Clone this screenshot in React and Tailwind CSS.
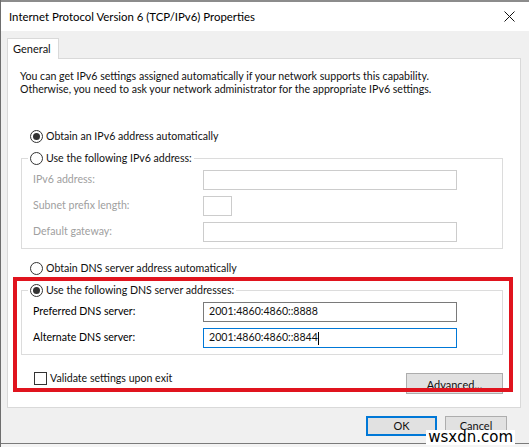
import React from 'react';

// Round option button with its caption
const Radio = ({ checked, label }) => (
  <span className="flex items-center gap-[3px] h-[14px] leading-[14px]">
    <span className="w-[13px] h-[13px] rounded-full border border-[#333333] bg-white flex items-center justify-center shrink-0">
      {checked && <span className="w-[7px] h-[7px] rounded-full bg-[#333333]" />}
    </span>
    <span className="whitespace-nowrap">{label}</span>
  </span>
);

// One label + text box line inside a group
const FieldRow = ({ label, value, small, disabled, focused }) => (
  <div className="flex items-center h-[20px] ml-[5px]">
    <span className={`w-[170px] whitespace-nowrap ${disabled ? 'text-[#a0a0a0]' : 'text-black'}`}>{label}</span>
    <div
      className={`h-[20px] bg-white border flex items-center pl-[5px] whitespace-nowrap ${small ? 'w-[29px]' : 'w-[254px]'} ${
        disabled ? 'border-[#cccccc]' : focused ? 'border-[#0078d7]' : 'border-[#7a7a7a]'
      }`}
    >
      {value}
      {focused && <span className="inline-block w-px h-[13px] bg-black" />}
    </div>
  </div>
);

const GroupBox = ({ legend, checked, children, className = '' }) => (
  <fieldset className={`mx-[13px] mr-[17px] border border-[#dcdcdc] pl-[6px] pt-[5px] pb-[6px] ${className}`}>
    <legend className="px-[2px] bg-white">
      <Radio checked={checked} label={legend} />
    </legend>
    <div className="flex flex-col gap-[6px]">{children}</div>
  </fieldset>
);

const DialogButton = ({ children, primary, className = '' }) => (
  <button
    className={`h-[20px] bg-[#e1e1e1] flex items-center justify-center ${
      primary ? 'border-2 border-[#0078d7]' : 'border border-[#adadad]'
    } ${className}`}
  >
    {children}
  </button>
);

export default function App() {
  return (
    <div className="relative w-[529px] h-[447px] overflow-hidden bg-[#f0f0f0] border-l border-[#6e6e6e] text-[10.6px] text-[#111] font-['Segoe_UI',Lato,'Noto_Sans',sans-serif]">
      {/* title bar */}
      <div className="h-[31px] bg-white border-t-2 border-[#8c8c8c] flex items-center justify-between pl-[8px] pr-[10px]">
        <span className="text-[11.4px] text-black">Internet Protocol Version 6 (TCP/IPv6) Properties</span>
        <svg width="11" height="11" viewBox="0 0 11 11" className="mr-[4px]">
          <path d="M0.5 0.5 L10.5 10.5 M10.5 0.5 L0.5 10.5" stroke="#111" strokeWidth="1" />
        </svg>
      </div>

      {/* tab strip */}
      <div className="mt-[7px] ml-[6px] flex">
        <div className="relative z-10 -mb-px h-[21px] w-[52px] bg-white border border-b-0 border-[#d9d9d9] flex items-center pl-[5px] text-[11px]">
          General
        </div>
      </div>

      {/* tab page */}
      <div className="ml-[6px] mr-[8px] h-[350px] bg-white border border-[#d9d9d9] pt-[11px]">
        <p className="pl-[12px] leading-[13px]">
          You can get IPv6 settings assigned automatically if your network supports this capability.
          <br />
          Otherwise, you need to ask your network administrator for the appropriate IPv6 settings.
        </p>

        <div className="mt-[33px] ml-[22px]">
          <Radio checked label="Obtain an IPv6 address automatically" />
        </div>

        <GroupBox legend="Use the following IPv6 address:" className="mt-[8px]">
          <FieldRow disabled label="IPv6 address:" />
          <FieldRow disabled small label="Subnet prefix length:" />
          <FieldRow disabled label="Default gateway:" />
        </GroupBox>

        <div className="mt-[12px] ml-[22px]">
          <Radio label="Obtain DNS server address automatically" />
        </div>

        <GroupBox checked legend="Use the following DNS server addresses:" className="mt-[8px]">
          <FieldRow label="Preferred DNS server:" value="2001:4860:4860::8888" />
          <FieldRow focused label="Alternate DNS server:" value="2001:4860:4860::8844" />
        </GroupBox>

        <div className="mt-[17px] ml-[26px] mr-[17px] flex items-start justify-between">
          <label className="flex items-center gap-[3px] h-[13px]">
            <span className="w-[13px] h-[13px] border border-[#333333] bg-white" />
            <span>Validate settings upon exit</span>
          </label>
          <DialogButton className="mt-[1px] w-[97px] h-[21px] pt-[3px] text-[11px]">Advanced...</DialogButton>
        </div>
      </div>

      {/* dialog buttons */}
      <div className="mt-[8px] mr-[22px] flex justify-end gap-[8px] text-[11px]">
        <DialogButton primary className="w-[71px]">OK</DialogButton>
        <DialogButton className="w-[62px]">Cancel</DialogButton>
      </div>

      <div className="absolute left-0 right-0 bottom-0 h-[4px] border-t border-[#7a7a7a] bg-[#f4f4f4]" />

      {/* highlight frame */}
      <div className="absolute left-[12px] top-[277px] w-[500px] h-[115px] border-4 border-[#e0141e]" />

      <span className="absolute right-[14px] bottom-[2px] px-[2px] bg-white text-[15px] leading-[15px] text-black font-['DejaVu_Sans',sans-serif]">
        wsxdn.com
      </span>
    </div>
  );
}
